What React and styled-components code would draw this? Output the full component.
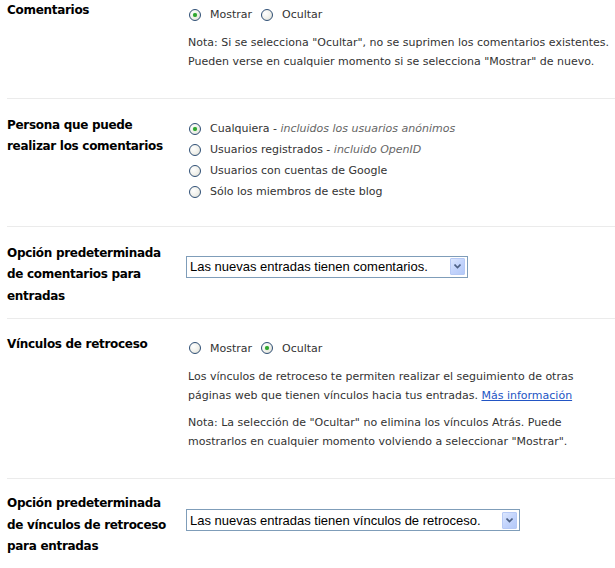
import React from "react";
import styled, { createGlobalStyle } from "styled-components";

const Global = createGlobalStyle`
  html, body { margin: 0; padding: 0; background: #fff; }
  body { font-family: "DejaVu Sans", Verdana, sans-serif; color: #333; }
`;

const Page = styled.div`
  padding-left: 7px;
  width: 608px;
`;

const Row = styled.div`
  display: grid;
  grid-template-columns: 181px 1fr;
  padding: ${(p) => p.$pad};
  border-bottom: ${(p) => (p.$last ? "none" : "1px solid #ebebeb")};
`;

const Label = styled.div`
  font-family: "DejaVu Sans", Tahoma, sans-serif;
  font-weight: bold;
  font-size: 12px;
  letter-spacing: -0.3px;
  line-height: ${(p) => p.$lh || "21px"};
  color: #000;
  white-space: nowrap;
`;

const Content = styled.div`
  padding-top: ${(p) => p.$top || "4px"};
  padding-bottom: ${(p) => p.$bottom || "0"};
  display: flex;
  flex-direction: column;
  justify-content: ${(p) => (p.$center ? "center" : "flex-start")};
`;

const RadioLine = styled.div`
  display: flex;
  align-items: center;
  height: 21px;
  font-size: 11px;
  color: #333;
  white-space: nowrap;
`;

const RadioItem = styled.label`
  display: inline-flex;
  align-items: center;
  margin-right: 8px;
`;

const RadioText = styled.span`
  white-space: pre;
`;

const Circle = styled.span`
  box-sizing: border-box;
  width: 12px;
  height: 12px;
  border-radius: 50%;
  border: 1px solid #2f4f75;
  background: radial-gradient(circle at 35% 35%, #ffffff 0%, #f0f0ea 55%, #d4d4cc 100%);
  display: inline-flex;
  align-items: center;
  justify-content: center;
  margin: 0 9px 0 1px;
  flex: none;
  &::after {
    content: "";
    width: 4px;
    height: 4px;
    border-radius: 50%;
    background: ${(p) => (p.$on ? "#2fa52f" : "transparent")};
    box-shadow: ${(p) => (p.$on ? "0 0 1px #6fcf6f" : "none")};
  }
`;

const Hint = styled.span`
  color: #666;
  font-style: italic;
`;

const Para = styled.p`
  margin: ${(p) => p.$m || "0"};
  font-size: 11px;
  line-height: 19px;
  color: #333;
  white-space: nowrap;
`;

const Link = styled.a`
  color: #2255c4;
  text-decoration: underline;
  cursor: pointer;
`;

const Select = styled.div`
  box-sizing: border-box;
  width: ${(p) => p.$w};
  height: 22px;
  margin-left: -2px;
  border: 1px solid #7f9db9;
  display: flex;
  align-items: center;
  justify-content: space-between;
  padding: 0 2px 0 3px;
  font-family: "Liberation Sans", Arial, sans-serif;
  font-size: 13px;
  color: #000;
  background: #fff;
`;

const ArrowBtn = styled.span`
  box-sizing: border-box;
  width: 15px;
  height: 17px;
  border: 1px solid #b6c9f5;
  border-radius: 1px;
  background: linear-gradient(135deg, #dce7fe 0%, #c3d4fc 50%, #b4c9f8 100%);
  display: flex;
  align-items: center;
  justify-content: center;
`;

function Radio({ on, children }) {
  return (
    <RadioItem>
      <Circle $on={on} />
      <RadioText>{children}</RadioText>
    </RadioItem>
  );
}

function Arrow() {
  return (
    <ArrowBtn>
      <svg width="7" height="5" viewBox="0 0 7 5">
        <path d="M0.5 0.5 L3.5 3.5 L6.5 0.5" fill="none" stroke="#4d6185" strokeWidth="1.6" />
      </svg>
    </ArrowBtn>
  );
}

export default function App() {
  return (
    <>
      <Global />
      <Page>
        <Row $pad="0 0 27px">
          <Label>Comentarios</Label>
          <Content>
            <RadioLine>
              <Radio on>Mostrar</Radio>
              <Radio>Ocultar</Radio>
            </RadioLine>
            <Para $m="8px 0 0">
              Nota: Si se selecciona "Ocultar", no se suprimen los comentarios existentes.
              <br />
              Pueden verse en cualquier momento si se selecciona "Mostrar" de nuevo.
            </Para>
          </Content>
        </Row>

        <Row $pad="16px 0 24px">
          <Label $lh="20.5px">
            Persona que puede
            <br />
            realizar los comentarios
          </Label>
          <Content $top="3px">
            <RadioLine>
              <Radio on>
                {"Cualquiera - "}
                <Hint>incluidos los usuarios anónimos</Hint>
              </Radio>
            </RadioLine>
            <RadioLine>
              <Radio>
                {"Usuarios registrados - "}
                <Hint>incluido OpenID</Hint>
              </Radio>
            </RadioLine>
            <RadioLine>
              <Radio>Usuarios con cuentas de Google</Radio>
            </RadioLine>
            <RadioLine>
              <Radio>Sólo los miembros de este blog</Radio>
            </RadioLine>
          </Content>
        </Row>

        <Row $pad="16px 0 11px">
          <Label $lh="21.3px">
            Opción predeterminada
            <br />
            de comentarios para
            <br />
            entradas
          </Label>
          <Content $top="0" $bottom="16px" $center>
            <Select $w="282px">
              Las nuevas entradas tienen comentarios.
              <Arrow />
            </Select>
          </Content>
        </Row>

        <Row $pad="15px 0 27px">
          <Label>Vínculos de retroceso</Label>
          <Content>
            <RadioLine>
              <Radio>Mostrar</Radio>
              <Radio on>Ocultar</Radio>
            </RadioLine>
            <Para $m="8px 0 0">
              Los vínculos de retroceso te permiten realizar el seguimiento de otras
              <br />
              páginas web que tienen vínculos hacia tus entradas. <Link>Más información</Link>
            </Para>
            <Para $m="8px 0 0">
              Nota: La selección de "Ocultar" no elimina los vínculos Atrás. Puede
              <br />
              mostrarlos en cualquier momento volviendo a seleccionar "Mostrar".
            </Para>
          </Content>
        </Row>

        <Row $pad="14px 0 0" $last>
          <Label $lh="21.7px">
            Opción predeterminada
            <br />
            de vínculos de retroceso
            <br />
            para entradas
          </Label>
          <Content $top="0" $bottom="10px" $center>
            <Select $w="334px">
              Las nuevas entradas tienen vínculos de retroceso.
              <Arrow />
            </Select>
          </Content>
        </Row>
      </Page>
    </>
  );
}
